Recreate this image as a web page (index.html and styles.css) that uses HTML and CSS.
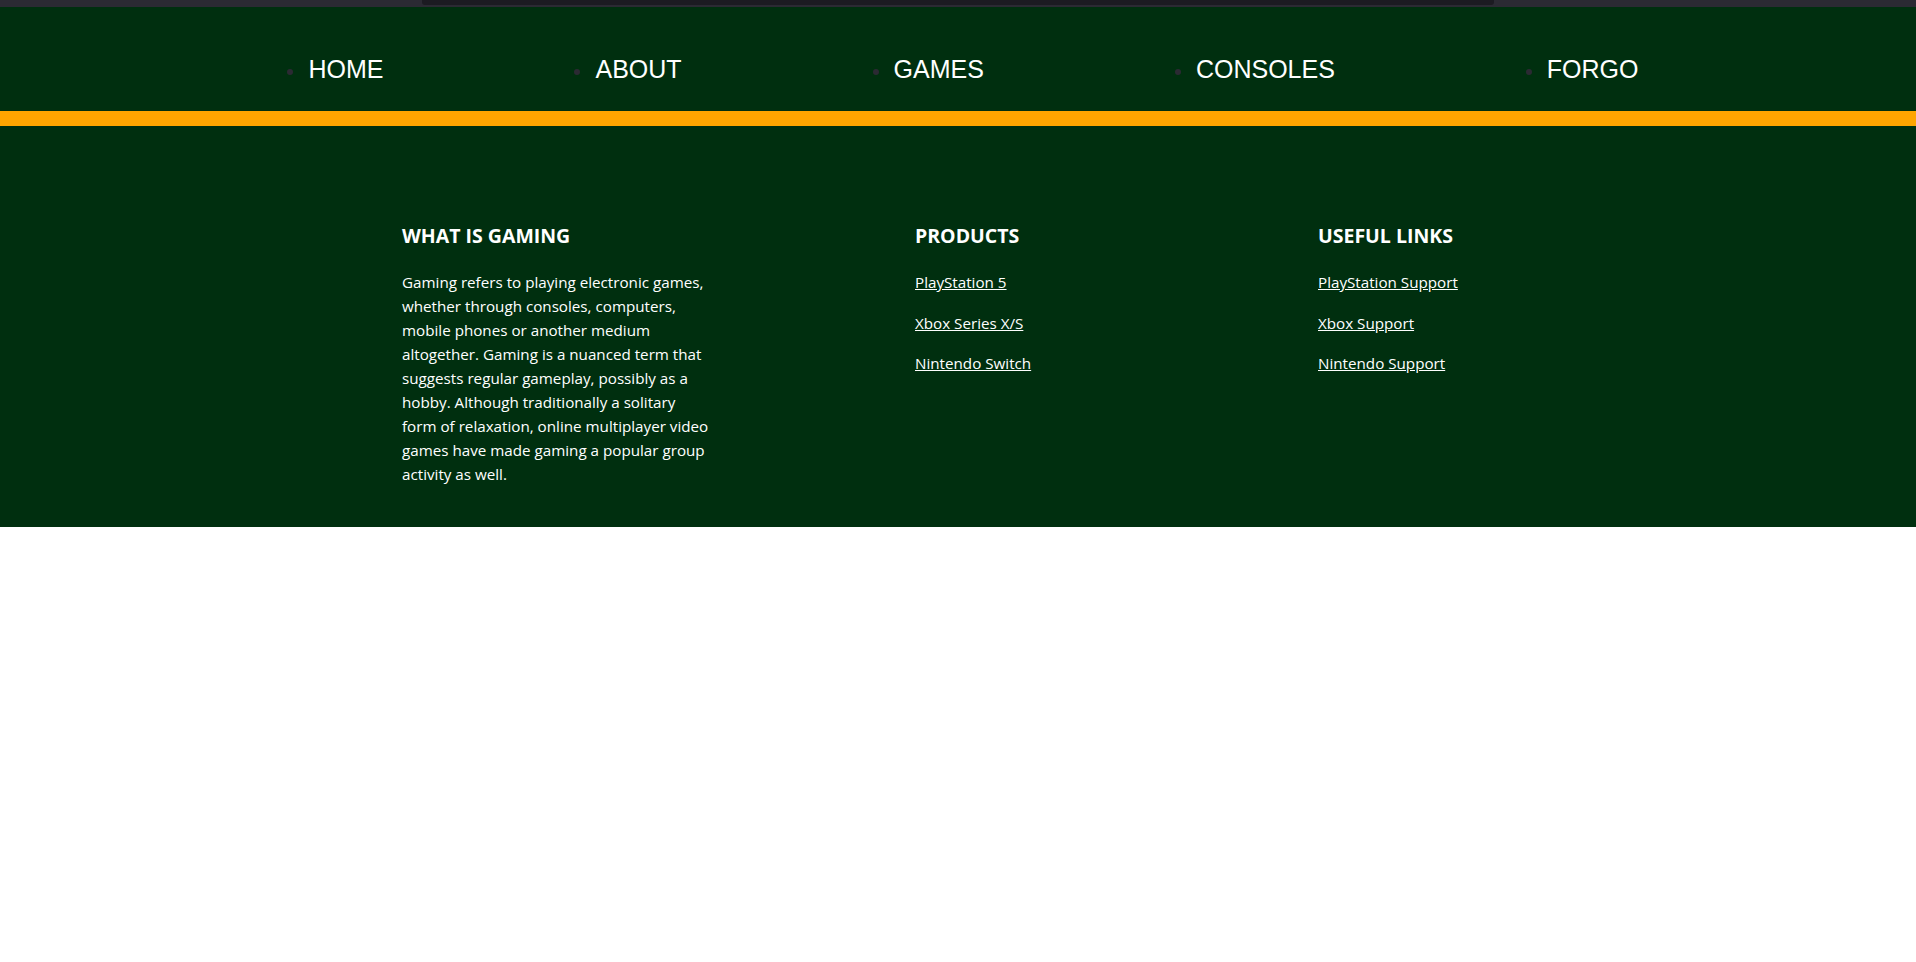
FILE: index.html
```html
<!DOCTYPE html>
<html lang="en">
<head>
<meta charset="utf-8">
<title>Gaming</title>
<link rel="stylesheet" href="styles.css">
</head>
<body>
<div class="topstrip"><div class="topstrip-bar"></div></div>
<header class="nav">
  <ul class="nav-list">
    <li class="nav-item"><a href="#">HOME</a></li>
    <li class="nav-item"><a href="#">ABOUT</a></li>
    <li class="nav-item"><a href="#">GAMES</a></li>
    <li class="nav-item"><a href="#">CONSOLES</a></li>
    <li class="nav-item"><a href="#">FORGO</a></li>
  </ul>
</header>
<div class="accent"></div>
<footer class="footer">
  <div class="footer-inner">
    <section class="col col-about">
      <h3 class="col-title">WHAT IS GAMING</h3>
      <p class="col-text">Gaming refers to playing electronic games, whether through consoles, computers, mobile phones or another medium altogether. Gaming is a nuanced term that suggests regular gameplay, possibly as a hobby. Although traditionally a solitary form of relaxation, online multiplayer video games have made gaming a popular group activity as well.</p>
    </section>
    <section class="col">
      <h3 class="col-title">PRODUCTS</h3>
      <ul class="links">
        <li><a href="#">PlayStation 5</a></li>
        <li><a href="#">Xbox Series X/S</a></li>
        <li><a href="#">Nintendo Switch</a></li>
      </ul>
    </section>
    <section class="col">
      <h3 class="col-title">USEFUL LINKS</h3>
      <ul class="links">
        <li><a href="#">PlayStation Support</a></li>
        <li><a href="#">Xbox Support</a></li>
        <li><a href="#">Nintendo Support</a></li>
      </ul>
    </section>
  </div>
</footer>
</body>
</html>
```

FILE: styles.css
```css
html, body {
  margin: 0;
  padding: 0;
  background: #ffffff;
}

.topstrip {
  height: 7px;
  background: #2b2a33;
  display: flex;
  justify-content: flex-start;
}

.topstrip-bar {
  margin-left: 422px;
  width: 1072px;
  height: 5px;
  background: #1c1b22;
  border-radius: 0 0 3px 3px;
}

.nav {
  background: #002f0f;
  height: 104px;
  box-sizing: border-box;
  padding-top: 20px;
  display: flex;
  align-items: center;
}

.nav-list {
  list-style: none;
  margin: 0;
  padding: 0 0 0 10px;
  width: 100%;
  display: flex;
  justify-content: center;
  gap: 191px;
  box-sizing: border-box;
}

.nav-item {
  display: flex;
  align-items: center;
  font-family: "Liberation Sans", Arial, sans-serif;
}

.nav-item::before {
  content: "";
  width: 6px;
  height: 6px;
  border-radius: 50%;
  background: #2b2a33;
  margin-right: 15px;
  margin-top: 6px;
}

.nav-item a {
  color: #ffffff;
  text-decoration: none;
  font-size: 25px;
  line-height: 29px;
}

.accent {
  height: 15px;
  background: #ffa500;
}

.footer {
  background: #002f0f;
  color: #ffffff;
  font-family: "Open Sans", "Noto Sans", sans-serif;
  padding: 96px 0 41px;
}

.footer-inner {
  width: 1112px;
  margin: 0 auto;
  display: grid;
  grid-template-columns: 513px 403px 1fr;
}

.col-title {
  margin: 0 0 20px;
  font-size: 19.5px;
  line-height: 28px;
  font-weight: 700;
}

.col-text {
  margin: 0;
  width: 310px;
  font-size: 15.2px;
  line-height: 24px;
}

.links {
  list-style: none;
  margin: 0;
  padding: 0;
  display: flex;
  flex-direction: column;
  gap: 16px;
}

.links li {
  font-size: 15.2px;
  line-height: 24.5px;
}

.links a {
  color: #ffffff;
  text-decoration: underline;
}
```
